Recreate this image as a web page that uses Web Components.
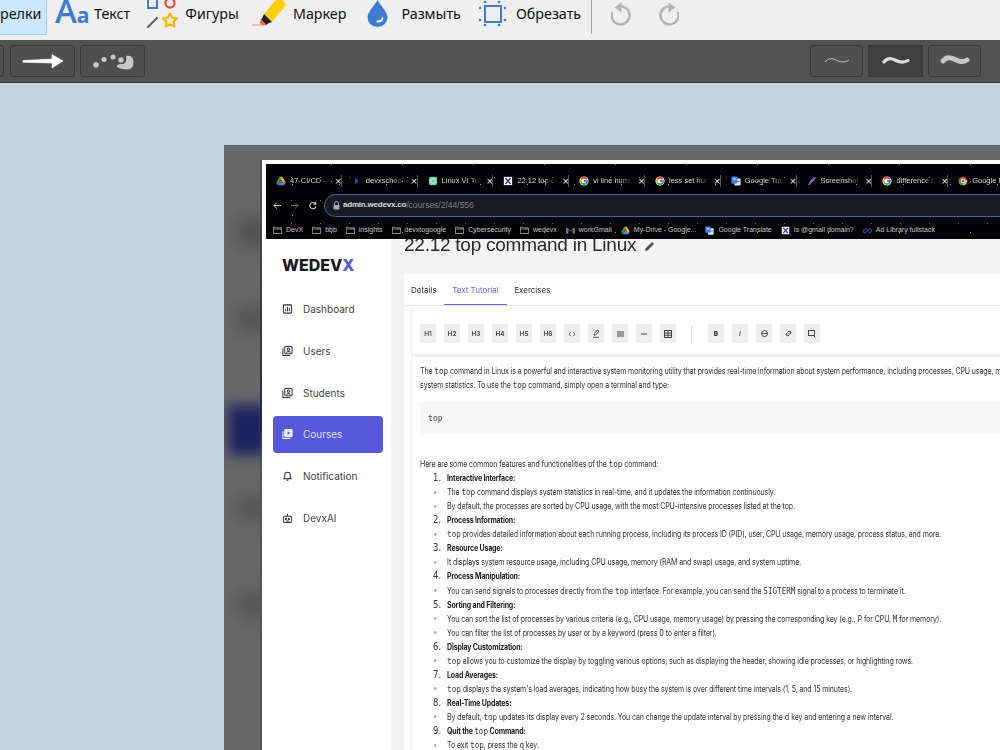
<!DOCTYPE html>
<html lang="ru">
<head>
<meta charset="utf-8">
<title>Paint</title>
<style>
  html, body { margin: 0; height: 750px; overflow: hidden; background: #c5d3e0; font-family: "Noto Sans", sans-serif; }
</style>
</head>
<body>
<paint-app>
  <paint-toolbar slot="top"></paint-toolbar>
  <paint-options slot="top"></paint-options>
  <shot-frame>
    <browser-chrome slot="chrome"></browser-chrome>
    <side-nav slot="side"></side-nav>
    <course-main slot="main">
      <doc-para>The <mono-code>top</mono-code> command in Linux is a powerful and interactive system monitoring utility that provides real-time information about system performance, including processes, CPU usage, me</doc-para>
      <doc-para>system statistics. To use the <mono-code>top</mono-code> command, simply open a terminal and type:</doc-para>
      <doc-code>top</doc-code>
      <doc-para>Here are some common features and functionalities of the <mono-code>top</mono-code> command:</doc-para>
      <doc-head num="1.">Interactive Interface:</doc-head>
      <doc-sub>The <mono-code>top</mono-code> command displays system statistics in real-time, and it updates the information continuously.</doc-sub>
      <doc-sub>By default, the processes are sorted by CPU usage, with the most CPU-intensive processes listed at the top.</doc-sub>
      <doc-head num="2.">Process Information:</doc-head>
      <doc-sub><mono-code>top</mono-code> provides detailed information about each running process, including its process ID (PID), user, CPU usage, memory usage, process status, and more.</doc-sub>
      <doc-head num="3.">Resource Usage:</doc-head>
      <doc-sub>It displays system resource usage, including CPU usage, memory (RAM and swap) usage, and system uptime.</doc-sub>
      <doc-head num="4.">Process Manipulation:</doc-head>
      <doc-sub>You can send signals to processes directly from the <mono-code>top</mono-code> interface. For example, you can send the <mono-code>SIGTERM</mono-code> signal to a process to terminate it.</doc-sub>
      <doc-head num="5.">Sorting and Filtering:</doc-head>
      <doc-sub>You can sort the list of processes by various criteria (e.g., CPU usage, memory usage) by pressing the corresponding key (e.g., <mono-code>P</mono-code> for CPU, <mono-code>M</mono-code> for memory).</doc-sub>
      <doc-sub>You can filter the list of processes by user or by a keyword (press <mono-code>O</mono-code> to enter a filter).</doc-sub>
      <doc-head num="6.">Display Customization:</doc-head>
      <doc-sub><mono-code>top</mono-code> allows you to customize the display by toggling various options, such as displaying the header, showing idle processes, or highlighting rows.</doc-sub>
      <doc-head num="7.">Load Averages:</doc-head>
      <doc-sub><mono-code>top</mono-code> displays the system's load averages, indicating how busy the system is over different time intervals (1, 5, and 15 minutes).</doc-sub>
      <doc-head num="8.">Real-Time Updates:</doc-head>
      <doc-sub>By default, <mono-code>top</mono-code> updates its display every 2 seconds. You can change the update interval by pressing the <mono-code>d</mono-code> key and entering a new interval.</doc-sub>
      <doc-head num="9.">Quit the <mono-code>top</mono-code> Command:</doc-head>
      <doc-sub>To exit <mono-code>top</mono-code>, press the <mono-code>q</mono-code> key.</doc-sub>
    </course-main>
  </shot-frame>
</paint-app>

<script>
  // small helper, every element below is just markup + styles in an open shadow root
  function el(name, render) {
    customElements.define(name, class extends HTMLElement {
      connectedCallback() {
        if (this.shadowRoot) return;
        this.attachShadow({ mode: 'open' }).innerHTML = render(this);
      }
    });
  }

  const BLUE = '#3f7bd0';
  const NARROW = '"Liberation Sans", Arial, sans-serif';

  const toolIcons = {
    text: `<span class="aa"><b>A</b><i>a</i></span>`,
    shapes: `<svg width="32" height="28" viewBox="0 0 32 28" fill="none">
        <rect x="2" y="-2" width="9" height="10" stroke="${BLUE}" stroke-width="2"/>
        <circle cx="24" cy="3" r="4.6" stroke="#ee4b35" stroke-width="2.2"/>
        <path d="M2 27L11 18" stroke="#666" stroke-width="2.2" stroke-linecap="round"/>
        <path d="M24 13.5l2.2 4.2 4.8.7-3.5 3.3.9 4.7-4.4-2.2-4.4 2.2.9-4.7-3.5-3.3 4.8-.7z" fill="#fdf3c8" stroke="#f2b90f" stroke-width="2.2" stroke-linejoin="round"/>
      </svg>`,
    marker: `<svg width="37" height="28" viewBox="0 0 37 28" fill="none">
        <path d="M1 25H12" stroke="#f4a9a0" stroke-width="1.4"/>
        <path d="M25.5-1h5l5 5.5L21 22 13 14z" fill="#ffcf0a"/>
        <path d="M13 14l8 8-4 1.5-1.6 1.4-5.4-5.4 1.2-1.5z" fill="#222"/>
        <path d="M10 19.500l5.400 5.400-3.500.6-3.200-2.500z" fill="#f0604d"/>
      </svg>`,
    blur: `<svg width="21" height="28" viewBox="0 0 21 28">
        <path d="M10.500 0C13 5 20.500 11.500 20.500 17.500a10 9.500 0 0 1-20 0C.5 11.500 8 5 10.500 0z" fill="${BLUE}"/>
        <path d="M10.500 21.500c2.500 0 4.500-1 5-3.300" fill="none" stroke="#fff" stroke-width="2" stroke-linecap="round"/>
      </svg>`,
    crop: `<svg width="29" height="28" viewBox="0 0 29 28" fill="none">
        <rect x="6" y="6" width="16" height="16" stroke="${BLUE}" stroke-width="2"/>
        <g fill="${BLUE}">
          <circle cx="6" cy="2" r="1.300"/><circle cx="20" cy="2" r="1.300"/>
          <circle cx="1" cy="8" r="1.300"/><circle cx="26" cy="8" r="1.300"/>
          <circle cx="1" cy="20" r="1.300"/><circle cx="26" cy="20" r="1.300"/>
          <circle cx="6" cy="25" r="1.300"/><circle cx="20" cy="25" r="1.300"/>
        </g>
      </svg>`
  };

  el('paint-app', () => `
    <style>
      :host { display: flex; flex-direction: column; width: 1000px; height: 750px; overflow: hidden; background: #c5d3e0; }
    </style>
    <slot name="top"></slot>
    <slot></slot>
  `);

  el('tool-button', (host) => `
    <style>
      :host { display: flex; align-items: center; height: 28px; font: 14.300px/20px "Noto Sans", sans-serif; color: #111; }
      .ic { display: flex; flex: none; }
      .aa { display: flex; align-items: baseline; color: ${BLUE}; font-family: "Open Sans", sans-serif; font-weight: 600; width: 31px; height: 28px; line-height: 28px; }
      .aa b { font-size: 33px; font-weight: 600; line-height: 28px; margin-top: -3px; }
      .aa i { font-size: 21px; font-style: normal; font-weight: 700; margin-left: 0; }
      svg { display: block; }
      span.t { white-space: nowrap; }
    </style>
    <span class="ic">${toolIcons[host.getAttribute('icon')]}</span>
    <span class="t" style="margin-left:${host.getAttribute('gap')}px"><slot></slot></span>
  `);

  el('paint-toolbar', () => `
    <style>
      :host { display: flex; align-items: flex-start; height: 40px; background: #efefef; flex: none; }
      .sel { width: 46px; height: 34px; box-sizing: content-box; background: #cce8ff; border: 1px solid #99d1ff; border-width: 0 1px 1px 0; border-radius: 0 0 2px 0;
             font: 14.300px/28px "Noto Sans", sans-serif; color: #111; text-align: right; }
      .sel span { display: block; padding-right: 7px; }
      .sep { width: 1px; height: 34px; background: #a3a3a3; margin-left: 10px; }
      .hist { display: flex; margin-left: 19px; gap: 28px; margin-top: 2px; }
      svg { display: block; }
    </style>
    <div class="sel"><span>релки</span></div>
    <tool-button icon="text" gap="8" style="margin-left:8px">Текст</tool-button>
    <tool-button icon="shapes" gap="7" style="margin-left:16px">Фигуры</tool-button>
    <tool-button icon="marker" gap="5" style="margin-left:12px">Маркер</tool-button>
    <tool-button icon="blur" gap="13" style="margin-left:21px">Размыть</tool-button>
    <tool-button icon="crop" gap="8" style="margin-left:18px">Обрезать</tool-button>
    <div class="sep"></div>
    <div class="hist">
      <svg width="20" height="24" viewBox="0 0 20 24" fill="none">
        <path d="M6 5.200a9 9 0 1 1-4.800 5" stroke="#b4b4b4" stroke-width="2.400"/>
        <path d="M10.500 .5v10L3.500 5.500z" fill="#b4b4b4"/>
      </svg>
      <svg width="20" height="24" viewBox="0 0 20 24" fill="none">
        <path d="M14 5.200a9 9 0 1 0 4.800 5" stroke="#b4b4b4" stroke-width="2.400"/>
        <path d="M9.500 .5v10l7-5z" fill="#b4b4b4"/>
      </svg>
    </div>
  `);

  el('option-button', (host) => `
    <style>
      :host { display: flex; align-items: center; justify-content: center; box-sizing: border-box; height: 32px; width: ${host.getAttribute('w')}px;
              background: ${host.hasAttribute('on') ? '#404040' : '#4f4f4f'}; border: 1px solid #3a3a3a; border-radius: ${host.hasAttribute('on') ? '0' : '3px'}; }
    </style>
    <slot></slot>
  `);

  el('paint-options', () => `
    <style>
      :host { display: flex; align-items: flex-start; box-sizing: border-box; height: 43px; padding-top: 5px; background: #535353; border-bottom: 1px solid #333; flex: none; }
      option-button { margin-left: 5px; }
      svg { display: block; }
      .sp { flex: 1; }
    </style>
    <option-button w="10" style="margin-left:-6px"></option-button>
    <option-button w="65" style="margin-left:6px">
      <svg width="42" height="18" viewBox="0 0 42 18"><path d="M1 8.600L30 7V2.500L41 9 30 16v-5L1 10.200z" fill="#fff" stroke="#fff" stroke-width=".6" stroke-linejoin="round"/></svg>
    </option-button>
    <option-button w="65">
      <svg width="42" height="20" viewBox="0 0 42 20"><g fill="#c9c9c9"><circle cx="4" cy="14" r="2.800"/><circle cx="12" cy="8.500" r="2.500"/><circle cx="21" cy="6" r="2.500"/><circle cx="29" cy="9" r="2.700"/>
        <path d="M34 5c3-1 6 0 7 3 1 4 0 9-3 10-4 1-9 0-13-2-1-2 2-3 5-3 3 0 5-2 4-8z"/></g></svg>
    </option-button>
    <div class="sp"></div>
    <option-button w="53">
      <svg width="26" height="12" viewBox="0 0 26 12"><path d="M1 7c3-4 7-4 11-2s8 3 13 0" fill="none" stroke="#c4c4c4" stroke-width="1"/></svg>
    </option-button>
    <option-button w="55" on>
      <svg width="28" height="14" viewBox="0 0 28 14"><path d="M2 8c3-4 7-4 11-2s8 3.500 13 .5" fill="none" stroke="#ddd" stroke-width="3.200" stroke-linecap="round"/></svg>
    </option-button>
    <option-button w="53" style="margin-right:19px">
      <svg width="30" height="16" viewBox="0 0 30 16"><path d="M3 8c3-4 7-4 11-2s8 4 13 1" fill="none" stroke="#c6c6c6" stroke-width="4.800" stroke-linecap="round"/></svg>
    </option-button>
  `);

  el('shot-frame', () => `
    <style>
      :host { display: block; flex: 1; min-height: 0; padding: 62px 0 0 224px; overflow: hidden; }
      .gray { position: relative; height: 605px; background: #686868; padding: 15px 0 0 38px; box-sizing: border-box; width: 900px; overflow: hidden; }
      .smear { position: absolute; left: 14px; width: 30px; filter: blur(9px); }
      .paper { position: relative; background: #fff; padding: 4px 0 0 4px; height: 600px; width: 900px; box-sizing: border-box; filter: blur(.4px); }
      .body { display: flex; }
      .edge { position: absolute; left: 36px; top: 15px; bottom: 0; width: 2px; background: linear-gradient(#555, #333 35%, #20265e 45%, #555 52%, #555); }
    </style>
    <div class="gray">
      <div class="smear" style="top:72px;height:30px;background:#505050"></div>
      <div class="smear" style="top:162px;height:24px;background:#505050"></div>
      <div class="smear" style="top:260px;height:50px;left:4px;width:40px;background:#1c2160;filter:blur(7px)"></div>
      <div class="smear" style="top:352px;height:22px;background:#515151"></div>
      <div class="smear" style="top:448px;height:24px;background:#525252"></div>
      <div class="edge"></div>
      <div class="paper">
        <slot name="chrome"></slot>
        <div class="body"><slot name="side"></slot><slot name="main"></slot></div>
      </div>
    </div>
  `);

  const fav = {
    drive: `<svg viewBox="0 0 12 12"><path d="M4.300 1h3.400l4 7H8.300z" fill="#fbbc04"/><path d="M4.300 1L.4 8l1.700 3 3.900-7z" fill="#1fa463"/><path d="M2.100 11h7.800l1.800-3H4z" fill="#4285f4"/><path d="M6 4L4 8h4z" fill="#ea4335"/></svg>`,
    dev: `<svg viewBox="0 0 12 12"><path d="M3 2l5 4-5 4 1-4z" fill="#3f4fd8"/></svg>`,
    gpt: `<svg viewBox="0 0 12 12"><rect x="1" y="1" width="10" height="10" rx="3" fill="#74c9ae"/><circle cx="6" cy="6" r="2.800" fill="none" stroke="#d8f2ea"/></svg>`,
    x: `<svg viewBox="0 0 12 12"><rect x="1" y="1" width="10" height="10" fill="#f4f4fb"/><path d="M3 2.500l6 7M9 2.500l-6 7" stroke="#3a3fae" stroke-width="1.800"/></svg>`,
    g: `<svg viewBox="0 0 12 12" fill="none" stroke-width="2.200"><circle cx="6" cy="6" r="5.500" fill="#fff" stroke="none"/><path d="M9.300 3.700A4 4 0 0 0 2.700 4" stroke="#ea4335"/><path d="M2.700 4a4 4 0 0 0 0 4" stroke="#fbbc04"/><path d="M2.700 8a4 4 0 0 0 6.800-.5" stroke="#34a853"/><path d="M6 6h4a4 4 0 0 1-.5 1.500" stroke="#4285f4"/></svg>`,
    tr: `<svg viewBox="0 0 12 12"><rect x="4" y="3" width="7.500" height="8.500" rx="1" fill="#dbe6fb"/><rect x=".5" y=".5" width="7" height="8.500" rx="1" fill="#4285f4"/><rect x="2.500" y="3" width="3" height="1.200" fill="#fff"/><rect x="7" y="6" width="3.500" height="1.200" fill="#4285f4"/></svg>`,
    pen: `<svg viewBox="0 0 12 12"><path d="M11 1C6 2 3 6 1.500 11 5 9 9 6 11 1z" fill="#8a5fd0"/></svg>`,
    chrome: `<svg viewBox="0 0 12 12"><circle cx="6" cy="6" r="5.200" fill="#ea4335"/><path d="M6 6L1.500 3.400A5.200 5.200 0 0 0 6 11.200z" fill="#34a853"/><path d="M6 6l5 -1.200A5.200 5.200 0 0 1 6 11.200z" fill="#fbbc04"/><circle cx="6" cy="6" r="2.700" fill="#fff"/><circle cx="6" cy="6" r="1.900" fill="#4285f4"/></svg>`,
    folder: `<svg viewBox="0 0 12 10" fill="none" stroke="#c9c9c9" stroke-width=".9"><path d="M.5 2.500V9h11V1.500H5L4 .5H.5zM.5 3h11"/></svg>`,
    gmail: `<svg viewBox="0 0 12 10"><path d="M.5 9V1L6 5.200 11.500 1v8H9V4L6 6.500 3 4v5z" fill="#ea4335"/><path d="M.5 9V1L3 3v6z" fill="#4285f4"/><path d="M11.500 9V1L9 3v6z" fill="#34a853"/></svg>`,
    meta: `<svg viewBox="0 0 14 10" fill="none" stroke="#2f6fe0" stroke-width="1.500"><path d="M1 8c0-4 1.500-6 3-6s3 3 3.500 4 1.500 2.500 3 2.500 2.500-1 2.500-3.500S11.500 2 10 2 7.500 4 6.500 5.500 4.500 8.500 3 8.500 1 8 1 8z"/></svg>`
  };

  el('browser-tab', (host) => `
    <style>
      :host { display: flex; align-items: center; flex: none; width: 75.800px; height: 12px; box-sizing: border-box; padding-left: 10px; color: #d4d4d4; font: 7.500px/12px ${NARROW}; position: relative; }
      .i { width: 10px; height: 10px; flex: none; margin-right: 4px; }
      .i svg { display: block; width: 10px; height: 10px; }
      .t { width: 44px; overflow: hidden; white-space: nowrap; -webkit-mask-image: linear-gradient(90deg, #000 62%, transparent 90%); mask-image: linear-gradient(90deg, #000 62%, transparent 90%); }
      .c { margin-left: 1px; color: #eee; font-size: 11px; }
      .s { position: absolute; right: 0; top: 0; width: 1px; height: 12px; background: #555; }
    </style>
    <span class="i">${fav[host.getAttribute('icon')]}</span>
    <span class="t"><slot></slot></span>
    <span class="c">×</span>
    <span class="s"></span>
  `);

  el('book-mark', (host) => `
    <style>
      :host { display: flex; align-items: center; flex: none; color: #c6c6c6; font: 7px/12px ${NARROW}; white-space: nowrap; }
      .i { width: 9px; height: 9px; margin-right: 4px; display: flex; align-items: center; }
      svg { display: block; width: 9px; height: 9px; }
    </style>
    <span class="i">${fav[host.getAttribute('icon') || 'folder']}</span><slot></slot>
  `);

  el('browser-chrome', () => `
    <style>
      :host { display: block; height: 75px; box-sizing: border-box; overflow: hidden; padding-top: 11px; color: #ccc; white-space: nowrap;
        background-color: #020204;
        background-image:
          radial-gradient(circle, #aaa 0 .5px, transparent 1px),
          radial-gradient(circle, #777 0 .6px, transparent 1px),
          radial-gradient(circle, #999 0 .5px, transparent 1px);
        background-size: 47px 31px, 29px 23px, 71px 17px;
        background-position: 3px 5px, 11px 2px, 30px 9px; }
      .tabs { display: flex; height: 12px; }
      .nav { display: flex; align-items: center; height: 24px; margin-top: 6px; }
      .arrows { display: flex; align-items: center; gap: 10px; padding-left: 7px; width: 51px; flex: none; box-sizing: border-box; }
      svg { display: block; }
      .url { flex: none; width: 800px; height: 23px; box-sizing: border-box; margin-left: 7px; border: 1.500px solid #3f64ad; border-radius: 12px; background: #191b21;
             display: flex; align-items: center; padding-left: 8px; font: 700 8px/12px ${NARROW}; letter-spacing: -.2px; color: #d8dbe2; }
      .url svg { margin-right: 3px; }
      .url span { color: #7b7f88; font-weight: 400; font-size: 8.500px; letter-spacing: 0; }
      .marks { display: flex; gap: 9px; padding-left: 7px; margin-top: 7px; height: 12px; }
    </style>
    <div class="tabs">
      <browser-tab icon="drive">47-CI/CD - 6</browser-tab>
      <browser-tab icon="dev">devxschool</browser-tab>
      <browser-tab icon="gpt">Linux VI Tuto</browser-tab>
      <browser-tab icon="x">22.12 top co</browser-tab>
      <browser-tab icon="g">vi line numb</browser-tab>
      <browser-tab icon="g">less set num</browser-tab>
      <browser-tab icon="tr">Google Tran</browser-tab>
      <browser-tab icon="pen">Screenshot</browser-tab>
      <browser-tab icon="g">difference b</browser-tab>
      <browser-tab icon="chrome">Google M</browser-tab>
    </div>
    <div class="nav">
      <div class="arrows">
        <svg width="9" height="9" viewBox="0 0 9 9" fill="none" stroke="#ddd"><path d="M9 4.500H1M4.500 1L1 4.500 4.500 8"/></svg>
        <svg width="9" height="9" viewBox="0 0 9 9" fill="none" stroke="#777"><path d="M0 4.500h8M4.500 1L8 4.500 4.500 8"/></svg>
        <svg width="9" height="9" viewBox="0 0 9 9" fill="none" stroke="#ddd" stroke-width="1.200"><path d="M7.800 5.500A3.500 3.500 0 1 1 7 2.200"/><path d="M7.500 .5v2.500H5" /></svg>
      </div>
      <div class="url">
        <svg width="7" height="9" viewBox="0 0 7 9"><path d="M1.500 4V2.500a2 2 0 0 1 4 0V4" fill="none" stroke="#aaa"/><rect x=".5" y="4" width="6" height="4.500" rx=".8" fill="#aaa"/></svg>
        admin.wedevx.co<span>/courses/2/44/556</span>
      </div>
    </div>
    <div class="marks">
      <book-mark>DevX</book-mark>
      <book-mark>bbb</book-mark>
      <book-mark>insights</book-mark>
      <book-mark>devxtogoogle</book-mark>
      <book-mark>Cybersecurity</book-mark>
      <book-mark>wedevx</book-mark>
      <book-mark icon="gmail">workGmail</book-mark>
      <book-mark icon="drive">My-Drive - Google...</book-mark>
      <book-mark icon="tr">Google Translate</book-mark>
      <book-mark icon="x">Is @gmail domain?</book-mark>
      <book-mark icon="meta">Ad Library fullstack</book-mark>
    </div>
  `);

  const navIcons = {
    dash: `<rect x="1.500" y="1.500" width="9" height="9" rx="1"/><path d="M4 8.500V6M6 8.500V3.500M8 8.500V5"/>`,
    users: `<rect x="3" y="1" width="8" height="8" rx="1"/><path d="M1 3v8h8"/><circle cx="7" cy="4" r="1.200"/><path d="M5 8c0-2 4-2 4 0"/>`,
    play: `<rect x="3" y="1" width="8" height="8" rx="1" fill="currentColor"/><path d="M1 3v8h8"/><path d="M6 3l3 2-3 2z" fill="#5558d9" stroke="none"/>`,
    bell: `<path d="M2 9h8L9 7.500V5a3 3 0 0 0-6 0v2.500zM5 10.500h2"/>`,
    bot: `<rect x="1.500" y="4" width="9" height="7" rx="1.500"/><path d="M6 4V1.500"/><circle cx="4.300" cy="7" r=".7" fill="currentColor"/><circle cx="7.700" cy="7" r=".7" fill="currentColor"/><path d="M4 9.300h4"/>`
  };

  el('nav-item', (host) => {
    const on = host.hasAttribute('active');
    return `
    <style>
      :host { display: flex; align-items: center; height: 37px; margin-top: 4.800px; padding-left: 9px; border-radius: 4px; box-sizing: border-box;
              font: 400 10px/14px Inter, sans-serif; color: ${on ? '#dfe0ff' : '#444'}; background: ${on ? '#5558d9' : 'transparent'}; }
      svg { display: block; width: 11px; height: 12px; margin-right: 10px; color: ${on ? '#f0f0ff' : '#333'}; }
    </style>
    <svg viewBox="0 0 12 12" fill="none" stroke="currentColor" stroke-width="1.100">${navIcons[host.getAttribute('icon')]}</svg>
    <slot></slot>`;
  });

  el('side-nav', () => `
    <style>
      :host { display: block; flex: none; width: 125px; height: 540px; box-sizing: border-box; background: #fff; padding: 16px 8px 0 7px; }
      .logo { font: 800 16px/20px Inter, sans-serif; color: #1a1a1f; padding-left: 9px; margin-bottom: 15.500px; }
      .logo b { color: #5558d9; font-weight: 800; }
    </style>
    <div class="logo">WEDEV<b>X</b></div>
    <nav-item icon="dash">Dashboard</nav-item>
    <nav-item icon="users">Users</nav-item>
    <nav-item icon="users">Students</nav-item>
    <nav-item icon="play" active>Courses</nav-item>
    <nav-item icon="bell">Notification</nav-item>
    <nav-item icon="bot">DevxAI</nav-item>
  `);

  el('fmt-button', () => `
    <style>
      :host { display: flex; align-items: center; justify-content: center; width: 16px; height: 19px; border-radius: 3px; background: #efefef; color: #444; font: 600 6.500px/10px Inter, sans-serif; flex: none; }
      ::slotted(svg) { display: block; }
    </style>
    <slot></slot>
  `);

  el('course-main', () => `
    <style>
      :host { display: block; flex: 1; min-width: 0; height: 540px; overflow: hidden; background: #f3f3f3; padding-left: 13px; box-sizing: border-box; }
      h1 { margin: -6px 0 17px; font: 400 19px/24px ${NARROW}; letter-spacing: -.25px; color: #2a2a2a; display: flex; align-items: center; white-space: nowrap; }
      h1 svg { margin-left: 8px; margin-top: 3px; }
      .card { background: #fff; }
      .tabs { display: flex; height: 31px; border-bottom: 1px solid #e6e6e6; font: 400 8px/32px Inter, sans-serif; color: #333; padding-left: 7px; }
      .tabs span { margin-right: 15.500px; position: relative; }
      .tabs .on { color: #6266d6; }
      .tabs .on::after { content: ""; position: absolute; left: -8px; right: -8px; top: 30px; height: 1px; background: #6266d6; }
      .editor { margin-left: 7px; border-left: 1px solid #eee; }
      .bar { display: flex; align-items: center; gap: 8px; height: 51px; padding: 7px 0 0 8px; box-sizing: border-box; border-bottom: 3px solid #eee; }
      .v { width: 1px; height: 18px; background: #ddd; margin: 0 8px 0 7px; }
      /* the reference picture is squeezed sideways, so the document text is too */
      .doc { padding: 7px 0 0 9.500px; white-space: nowrap; font: 400 8.300px/14.050px Inter, sans-serif; color: #333; transform: scaleX(.845); transform-origin: 0 0; width: 900px; }
      svg { display: block; }
    </style>
    <h1>22.12 top command in Linux
      <svg width="11" height="11" viewBox="0 0 11 11"><path d="M1 10l.6-2.700L8 1l2 2-6.400 6.400z" fill="#555"/></svg>
    </h1>
    <div class="card">
      <div class="tabs"><span>Details</span><span class="on">Text Tutorial</span><span>Exercises</span></div>
      <div class="editor">
        <div class="bar">
          <fmt-button>H1</fmt-button><fmt-button>H2</fmt-button><fmt-button>H3</fmt-button>
          <fmt-button>H4</fmt-button><fmt-button>H5</fmt-button><fmt-button>H6</fmt-button>
          <fmt-button><svg width="8" height="6" viewBox="0 0 8 6" fill="none" stroke="#444" stroke-width=".8"><path d="M3 .8L1 3l2 2.200M5 .8L7 3 5 5.200"/></svg></fmt-button>
          <fmt-button><svg width="8" height="9" viewBox="0 0 8 9" fill="none" stroke="#444" stroke-width=".9"><path d="M2 6l.4-1.600L5.500 1 7 2.300 3.700 6zM1 8.300h6"/></svg></fmt-button>
          <fmt-button><svg width="7" height="6" viewBox="0 0 7 6" fill="none" stroke="#444"><path d="M0 1h7M0 3h7M0 5h7"/></svg></fmt-button>
          <fmt-button><svg width="6" height="2" viewBox="0 0 6 2" fill="none" stroke="#444"><path d="M0 1h6"/></svg></fmt-button>
          <fmt-button><svg width="8" height="8" viewBox="0 0 8 8" fill="none" stroke="#444"><rect x=".5" y=".5" width="7" height="7"/><path d="M.5 3h7M.5 5.200h7M4 .5v7"/></svg></fmt-button>
          <span class="v"></span>
          <fmt-button><b>B</b></fmt-button>
          <fmt-button><i>I</i></fmt-button>
          <fmt-button><svg width="7" height="7" viewBox="0 0 7 7" fill="none" stroke="#444"><circle cx="3.500" cy="3.500" r="3"/><path d="M.5 3.500h6"/></svg></fmt-button>
          <fmt-button><svg width="7" height="7" viewBox="0 0 7 7" fill="none" stroke="#444"><path d="M3 4.500l1.500-2M2.500 2.500L1 4l.5 1.500L3 6l1-1M4.500 4.500L6 3l-.5-1.500L4 1 3 2"/></svg></fmt-button>
          <fmt-button><svg width="8" height="8" viewBox="0 0 8 8" fill="none" stroke="#444"><rect x=".5" y=".5" width="6" height="5"/><path d="M5 5l2.500 2.500"/></svg></fmt-button>
        </div>
        <div class="doc"><slot></slot></div>
      </div>
    </div>
  `);

  el('doc-para', () => `<style>:host { display: block; height: 14.050px; letter-spacing: -.12px; }</style><slot></slot>`);

  el('doc-code', () => `
    <style>
      :host { display: block; height: 32px; margin: 10px 0 23px; padding-left: 9.500px; background: #f7f7f8; font: 9.500px/32px "DejaVu Sans Mono", monospace; letter-spacing: 0; color: #444; }
    </style><slot></slot>`);

  el('doc-head', (host) => `
    <style>
      :host { display: flex; height: 14.050px; font-weight: 700; color: #222; letter-spacing: -.2px; }
      .n { width: 32px; box-sizing: border-box; padding-left: 15.400px; font-weight: 400; letter-spacing: 0; font-size: 10px; color: #333; font-family: "DejaVu Sans", sans-serif; }
    </style><span class="n">${host.getAttribute('num')}</span><span><slot></slot></span>`);

  el('doc-sub', () => `
    <style>
      :host { display: flex; align-items: center; height: 14.050px; padding-left: 16.600px; letter-spacing: -.12px; }
      .b { width: 3px; height: 3px; box-sizing: border-box; border: .7px solid #888; border-radius: 50%; margin-right: 12.400px; flex: none; }
    </style><span class="b"></span><span><slot></slot></span>`);

  el('mono-code', () => `<style>:host { font: 9px/1 "DejaVu Sans Mono", monospace; letter-spacing: 0; color: #333; font-weight: 400; }</style><slot></slot>`);
</script>
</body>
</html>
